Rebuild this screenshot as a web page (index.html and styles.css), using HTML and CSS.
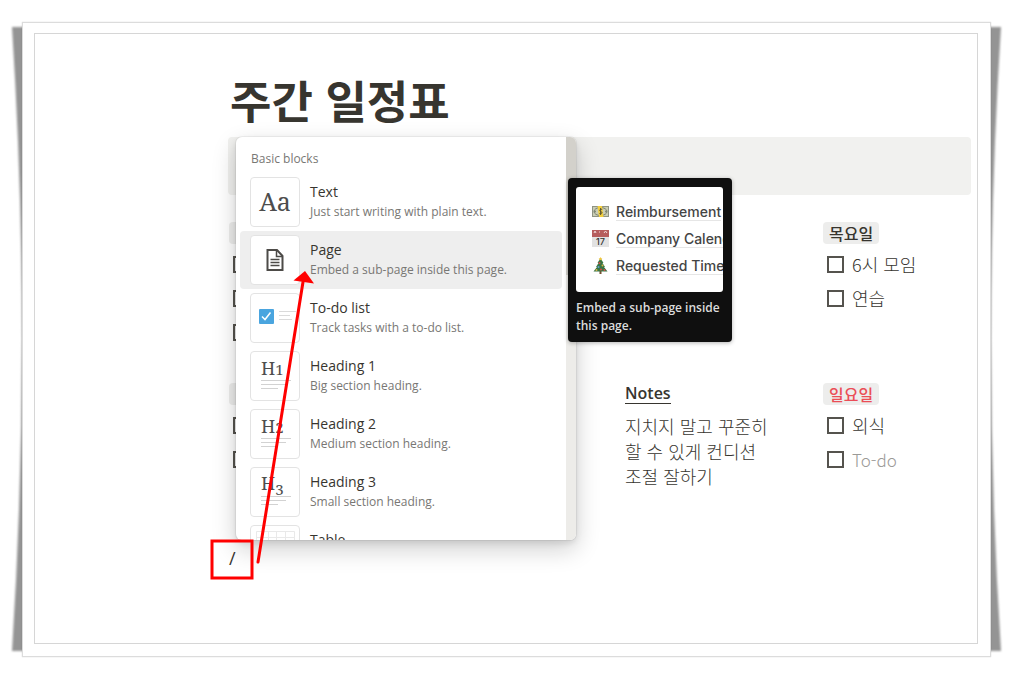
FILE: index.html
```
<!DOCTYPE html>
<html lang="ko">
<head>
  <meta charset="UTF-8">
  <meta name="viewport" content="width=device-width, initial-scale=1">
  <title>주간 일정표</title>
  <link rel="stylesheet" href="styles.css">
</head>
<body>

  <div class="frame">
    <svg class="frame-shadow left" viewBox="0 0 12 624" preserveAspectRatio="none" aria-hidden="true">
      <path d="M0 0 H12 V624 H0 Q20 312 0 0 Z"/>
    </svg>
    <svg class="frame-shadow right" viewBox="0 0 12 624" preserveAspectRatio="none" aria-hidden="true">
      <path d="M0 0 H12 V624 H0 Q20 312 0 0 Z"/>
    </svg>

    <div class="mat">
      <div class="sheet">
        <main class="content">
          <h1>주간 일정표</h1>
          <div class="callout"></div>

          <div class="week">
            <section class="day">
              <div class="tag blank"></div>
              <label class="todo"><input type="checkbox" aria-label="To-do"></label>
              <label class="todo"><input type="checkbox" aria-label="To-do"></label>
              <label class="todo"><input type="checkbox" aria-label="To-do"></label>
            </section>
            <section class="day"></section>
            <section class="day"></section>
            <section class="day">
              <h2 class="tag">목요일</h2>
              <label class="todo"><input type="checkbox"><span>6시 모임</span></label>
              <label class="todo"><input type="checkbox"><span>연습</span></label>
            </section>

            <section class="day">
              <div class="tag blank"></div>
              <label class="todo"><input type="checkbox" aria-label="To-do"></label>
              <label class="todo"><input type="checkbox" aria-label="To-do"></label>
            </section>
            <section class="day"></section>
            <section class="day notes">
              <h2>Notes</h2>
              <p>지치지 말고 꾸준히 할 수 있게 컨디션 조절 잘하기</p>
            </section>
            <section class="day">
              <h2 class="tag sunday">일요일</h2>
              <label class="todo"><input type="checkbox"><span>외식</span></label>
              <label class="todo empty"><input type="checkbox"><span>To-do</span></label>
            </section>
          </div>

          <p class="command">/</p>

          <div class="menu">
            <div class="menu-list">
              <h3>Basic blocks</h3>
              <button class="block">
                <span class="thumb aa">Aa</span>
                <span class="info"><span class="name">Text</span><span class="desc">Just start writing with plain text.</span></span>
              </button>
              <button class="block active">
                <span class="thumb">
                  <svg width="18" height="22" viewBox="0 0 18 22" fill="none" stroke="#4d4b48" stroke-width="2">
                    <path d="M1.5 1H11L16.5 7V21H1.5Z"/>
                    <path d="M10.5 1V7.5H16.5" stroke-width="1.5"/>
                    <path d="M4.5 10.5H13.5M4.5 13.5H13.5M4.5 16.5H13.5" stroke-width="1.5"/>
                  </svg>
                </span>
                <span class="info"><span class="name">Page</span><span class="desc">Embed a sub-page inside this page.</span></span>
              </button>
              <button class="block">
                <span class="thumb">
                  <svg width="48" height="48" viewBox="0 0 48 48" fill="none">
                    <rect x="8" y="15" width="15" height="15" rx="1" fill="#4aa5df"/>
                    <path d="M11 22.5L14 25.5L19.5 18.5" stroke="#fff" stroke-width="1.5"/>
                    <path d="M28 17.5H45M28 21.5H39M28 25.5H41" stroke="#dadada"/>
                  </svg>
                </span>
                <span class="info"><span class="name">To-do list</span><span class="desc">Track tasks with a to-do list.</span></span>
              </button>
              <button class="block">
                <span class="thumb heading">
                  <span>H<small>1</small></span>
                  <svg width="31" height="11" viewBox="0 0 31 11" stroke="#d2d2d2"><path d="M0 1.5H30M0 5.5H25M0 9.5H17"/></svg>
                </span>
                <span class="info"><span class="name">Heading 1</span><span class="desc">Big section heading.</span></span>
              </button>
              <button class="block">
                <span class="thumb heading">
                  <span>H<small>2</small></span>
                  <svg width="31" height="11" viewBox="0 0 31 11" stroke="#d2d2d2"><path d="M0 1.5H30M0 5.5H25M0 9.5H17"/></svg>
                </span>
                <span class="info"><span class="name">Heading 2</span><span class="desc">Medium section heading.</span></span>
              </button>
              <button class="block">
                <span class="thumb heading">
                  <span>H<small class="low">3</small></span>
                  <svg width="31" height="11" viewBox="0 0 31 11" stroke="#d2d2d2"><path d="M0 1.5H30M0 5.5H25M0 9.5H17"/></svg>
                </span>
                <span class="info"><span class="name">Heading 3</span><span class="desc">Small section heading.</span></span>
              </button>
              <button class="block">
                <span class="thumb">
                  <svg width="48" height="48" viewBox="0 0 48 48" fill="none" stroke="#e9e9e9">
                    <path d="M5.5 5.5H43.5V42.5H5.5ZM5.5 11.5H43.5M5.5 17.5H43.5M17.5 5.5V42.5M25.5 5.5V42.5M34.5 5.5V42.5"/>
                  </svg>
                </span>
                <span class="info"><span class="name">Table</span><span class="desc">&nbsp;</span></span>
              </button>
            </div>
            <div class="scrollbar"><div class="scroll-thumb"></div></div>
          </div>

          <div class="tooltip" role="tooltip">
            <ul>
              <li>
                <svg width="17" height="17" viewBox="0 0 17 17">
                  <rect x="0" y="3" width="17" height="11" fill="#8f9383"/>
                  <rect x="1" y="4" width="15" height="9" fill="#c9cdb4"/>
                  <ellipse cx="8.5" cy="8.5" rx="6.5" ry="4" fill="none" stroke="#7d8272"/>
                  <circle cx="3" cy="8.5" r="1" fill="#7d8272"/>
                  <circle cx="14" cy="8.5" r="1" fill="#7d8272"/>
                  <path d="M5.5 3H10L11.5 14H7Z" fill="#f2cf3e"/>
                  <path d="M10.2 6.5C7.5 5.5 7 8 8.8 8.5C11 9 10 11.5 7.5 10.5M8.6 5V12" fill="none" stroke="#5d5630"/>
                </svg>
                <span>Reimbursement</span>
              </li>
              <li>
                <svg width="17" height="17" viewBox="0 0 17 17">
                  <rect width="17" height="17" fill="#e2e2e2"/>
                  <rect width="17" height="7" fill="#b65d5d"/>
                  <path d="M2 3L3 1L4 3M12 3L13.5 1L15 3M7 2H8" stroke="#f0dada" fill="none"/>
                  <text x="8.5" y="15" text-anchor="middle" class="date">17</text>
                </svg>
                <span>Company Calendar</span>
              </li>
              <li>
                <svg width="17" height="17" viewBox="0 0 17 17">
                  <rect x="7.5" y="13" width="2" height="4" fill="#76502f"/>
                  <path d="M8.5 1L11.5 6H10.5L13 10H12L15.5 14.5H1.5L5 10H4L6.5 6H5.5Z" fill="#3a7544"/>
                  <path d="M8.5 0L9.2 1.2L10.4 1.4L9.5 2.3L9.7 3.5L8.5 2.9L7.3 3.5L7.5 2.3L6.6 1.4L7.8 1.2Z" fill="#f0c63c"/>
                  <circle cx="7.5" cy="6" r="1" fill="#d84a4a"/>
                  <circle cx="10.5" cy="8.5" r="1" fill="#d9b648"/>
                  <circle cx="6.5" cy="10" r="1" fill="#5f9fd0"/>
                  <circle cx="9" cy="12.5" r="1" fill="#d84a4a"/>
                  <circle cx="4.5" cy="13" r="1" fill="#d9b648"/>
                  <circle cx="12.5" cy="13" r="1" fill="#d84a4a"/>
                </svg>
                <span>Requested Time</span>
              </li>
            </ul>
            <p>Embed a sub-page inside this page.</p>
          </div>

          <svg class="annotation" width="110" height="330" viewBox="210 260 110 330" aria-hidden="true">
            <rect x="212" y="541" width="40" height="37" fill="none" stroke="#f00" stroke-width="3"/>
            <path d="M258 562L303 282" stroke="#f00" stroke-width="3" stroke-linecap="round"/>
            <path d="M305 271L293.500 280.500L314 283.500Z" fill="#f00"/>
          </svg>
        </main>
      </div>
    </div>
  </div>

</body>
</html>
```

FILE: styles.css
```
* {
  box-sizing: border-box;
}

body {
  margin: 0;
  min-height: 100vh;
  display: flex;
  background: #fff;
  color: #37352f;
  font-family: 'Open Sans', 'Noto Sans CJK KR', sans-serif;
}

h1, h2, h3, p, ul {
  margin: 0;
  padding: 0;
}

/* picture frame */
.frame {
  position: relative;
  flex: 1;
  display: flex;
  margin: 22px 21px 21px 22px;
}

.frame-shadow {
  position: absolute;
  top: 5px;
  width: 12px;
  height: calc(100% - 11px);
  fill: #949494;
  filter: blur(1px);
  overflow: visible;
}

.frame-shadow.left {
  left: -10px;
}

.frame-shadow.right {
  right: -10px;
  transform: scaleX(-1);
}

.mat {
  position: relative;
  flex: 1;
  display: flex;
  padding: 10px 12px 12px 11px;
  background: #fff;
  border: 1px solid #dcdcdc;
  box-shadow: 0 0 1px rgba(0, 0, 0, 0.2);
}

.sheet {
  flex: 1;
  border: 1px solid #d6d6d6;
  padding: 0 6px 0 193px;
}

.content {
  position: relative;
  min-width: 0;
}

h1 {
  padding: 34px 0 5px 2px;
  font-family: 'Noto Sans CJK KR', sans-serif;
  font-size: 45px;
  line-height: 64px;
  font-weight: 700;
}

.callout {
  height: 58px;
  background: #f1f1ef;
  border-radius: 4px;
}

/* weekly board */
.week {
  display: grid;
  grid-template-columns: repeat(4, 1fr);
  grid-auto-rows: 127px;
  gap: 34px 50px;
  margin-top: 27px;
  padding-left: 1px;
}

.tag {
  width: fit-content;
  margin-bottom: 3px;
  padding: 0 6px;
  background: #ededec;
  border-radius: 4px;
  font-family: 'Noto Sans CJK KR', sans-serif;
  font-size: 16px;
  line-height: 22px;
  font-weight: 500;
}

.tag.blank {
  width: 56px;
  height: 22px;
}

.tag.sunday {
  color: #eb4d57;
}

.todo {
  display: flex;
  align-items: center;
  gap: 8px;
  height: 34px;
  padding-left: 4px;
  font-family: 'Noto Sans CJK KR', sans-serif;
  font-size: 18px;
  font-weight: 300;
  white-space: nowrap;
}

.todo input {
  appearance: none;
  flex: none;
  width: 17px;
  height: 17px;
  margin: 0;
  border: 2px solid #55534e;
}

.todo.empty {
  color: #9b9a97;
  font-size: 17px;
}

.notes h2 {
  width: fit-content;
  border-bottom: 1px solid #37352f;
  font-size: 16px;
  line-height: 20px;
  font-weight: 600;
}

.notes p {
  margin-top: 10px;
  font-family: 'Noto Sans CJK KR', sans-serif;
  font-size: 18px;
  line-height: 25px;
  font-weight: 300;
  word-break: keep-all;
}

.command {
  margin-top: 34px;
  padding-left: 1px;
  font-size: 18px;
  line-height: 28px;
}

/* slash command menu */
.menu {
  position: absolute;
  top: 103px;
  left: 8px;
  width: 340px;
  height: 403px;
  display: flex;
  overflow: hidden;
  background: #fff;
  border-radius: 6px;
  box-shadow: 0 0 0 1px rgba(15, 15, 15, 0.05), 0 3px 6px rgba(15, 15, 15, 0.1), 0 9px 24px rgba(15, 15, 15, 0.2);
}

.menu-list {
  flex: 1;
  padding: 0 4px;
}

.menu h3 {
  padding: 13px 11px 5px;
  color: #787774;
  font-size: 12px;
  line-height: 18px;
  font-weight: 400;
}

.block {
  display: flex;
  align-items: center;
  gap: 10px;
  width: 100%;
  height: 58px;
  padding: 0 10px;
  border: none;
  border-radius: 4px;
  background: none;
  color: #37352f;
  font-family: inherit;
  text-align: left;
  cursor: pointer;
}

.block:hover,
.block.active {
  background: #eeeeee;
}

.thumb {
  flex: none;
  display: flex;
  align-items: center;
  justify-content: center;
  width: 50px;
  height: 50px;
  border: 1px solid #e3e3e3;
  border-radius: 4px;
  background: #fff;
  color: #4d4d4d;
  font-family: 'Noto Serif', 'Liberation Serif', serif;
}

.thumb.aa {
  padding-bottom: 3px;
  font-size: 25px;
}

.thumb.heading {
  flex-direction: column;
  align-items: flex-start;
  padding: 0 0 5px 10px;
  font-size: 18px;
  line-height: 20px;
}

.thumb small {
  font-size: 15px;
}

.thumb small.low {
  vertical-align: sub;
  line-height: 12px;
}

.info {
  min-width: 0;
}

.name,
.desc {
  display: block;
  white-space: nowrap;
}

.name {
  font-size: 14px;
  line-height: 20px;
}

.desc {
  color: #787774;
  font-size: 12px;
  line-height: 20px;
}

.scrollbar {
  width: 10px;
  background: #edece9;
}

.scroll-thumb {
  height: 138px;
  background: #d3d1cb;
}

/* block preview */
.tooltip {
  position: absolute;
  top: 144px;
  left: 340px;
  width: 164px;
  padding: 9px 9px 7px 8px;
  background: #0f0f0f;
  border-radius: 4px;
  box-shadow: 0 1px 4px rgba(0, 0, 0, 0.3);
}

.tooltip ul {
  height: 105px;
  padding: 11px 0 0 16px;
  overflow: hidden;
  list-style: none;
  background: #fff;
  border-radius: 3px;
}

.tooltip li {
  display: flex;
  align-items: center;
  gap: 7px;
  height: 27px;
  color: #444;
  font-family: 'Inter', sans-serif;
  font-size: 14px;
  line-height: 17px;
  font-weight: 500;
  white-space: nowrap;
}

.tooltip li svg {
  flex: none;
}

.tooltip li span {
  border-bottom: 1px solid #e6e6e6;
}

.tooltip .date {
  fill: #333;
  font-size: 9px;
  font-weight: 500;
}

.tooltip p {
  margin-top: 7px;
  color: #dcdcdc;
  font-size: 12px;
  line-height: 18px;
  font-weight: 600;
}

.annotation {
  position: absolute;
  top: 226px;
  left: -18px;
  pointer-events: none;
}
```
